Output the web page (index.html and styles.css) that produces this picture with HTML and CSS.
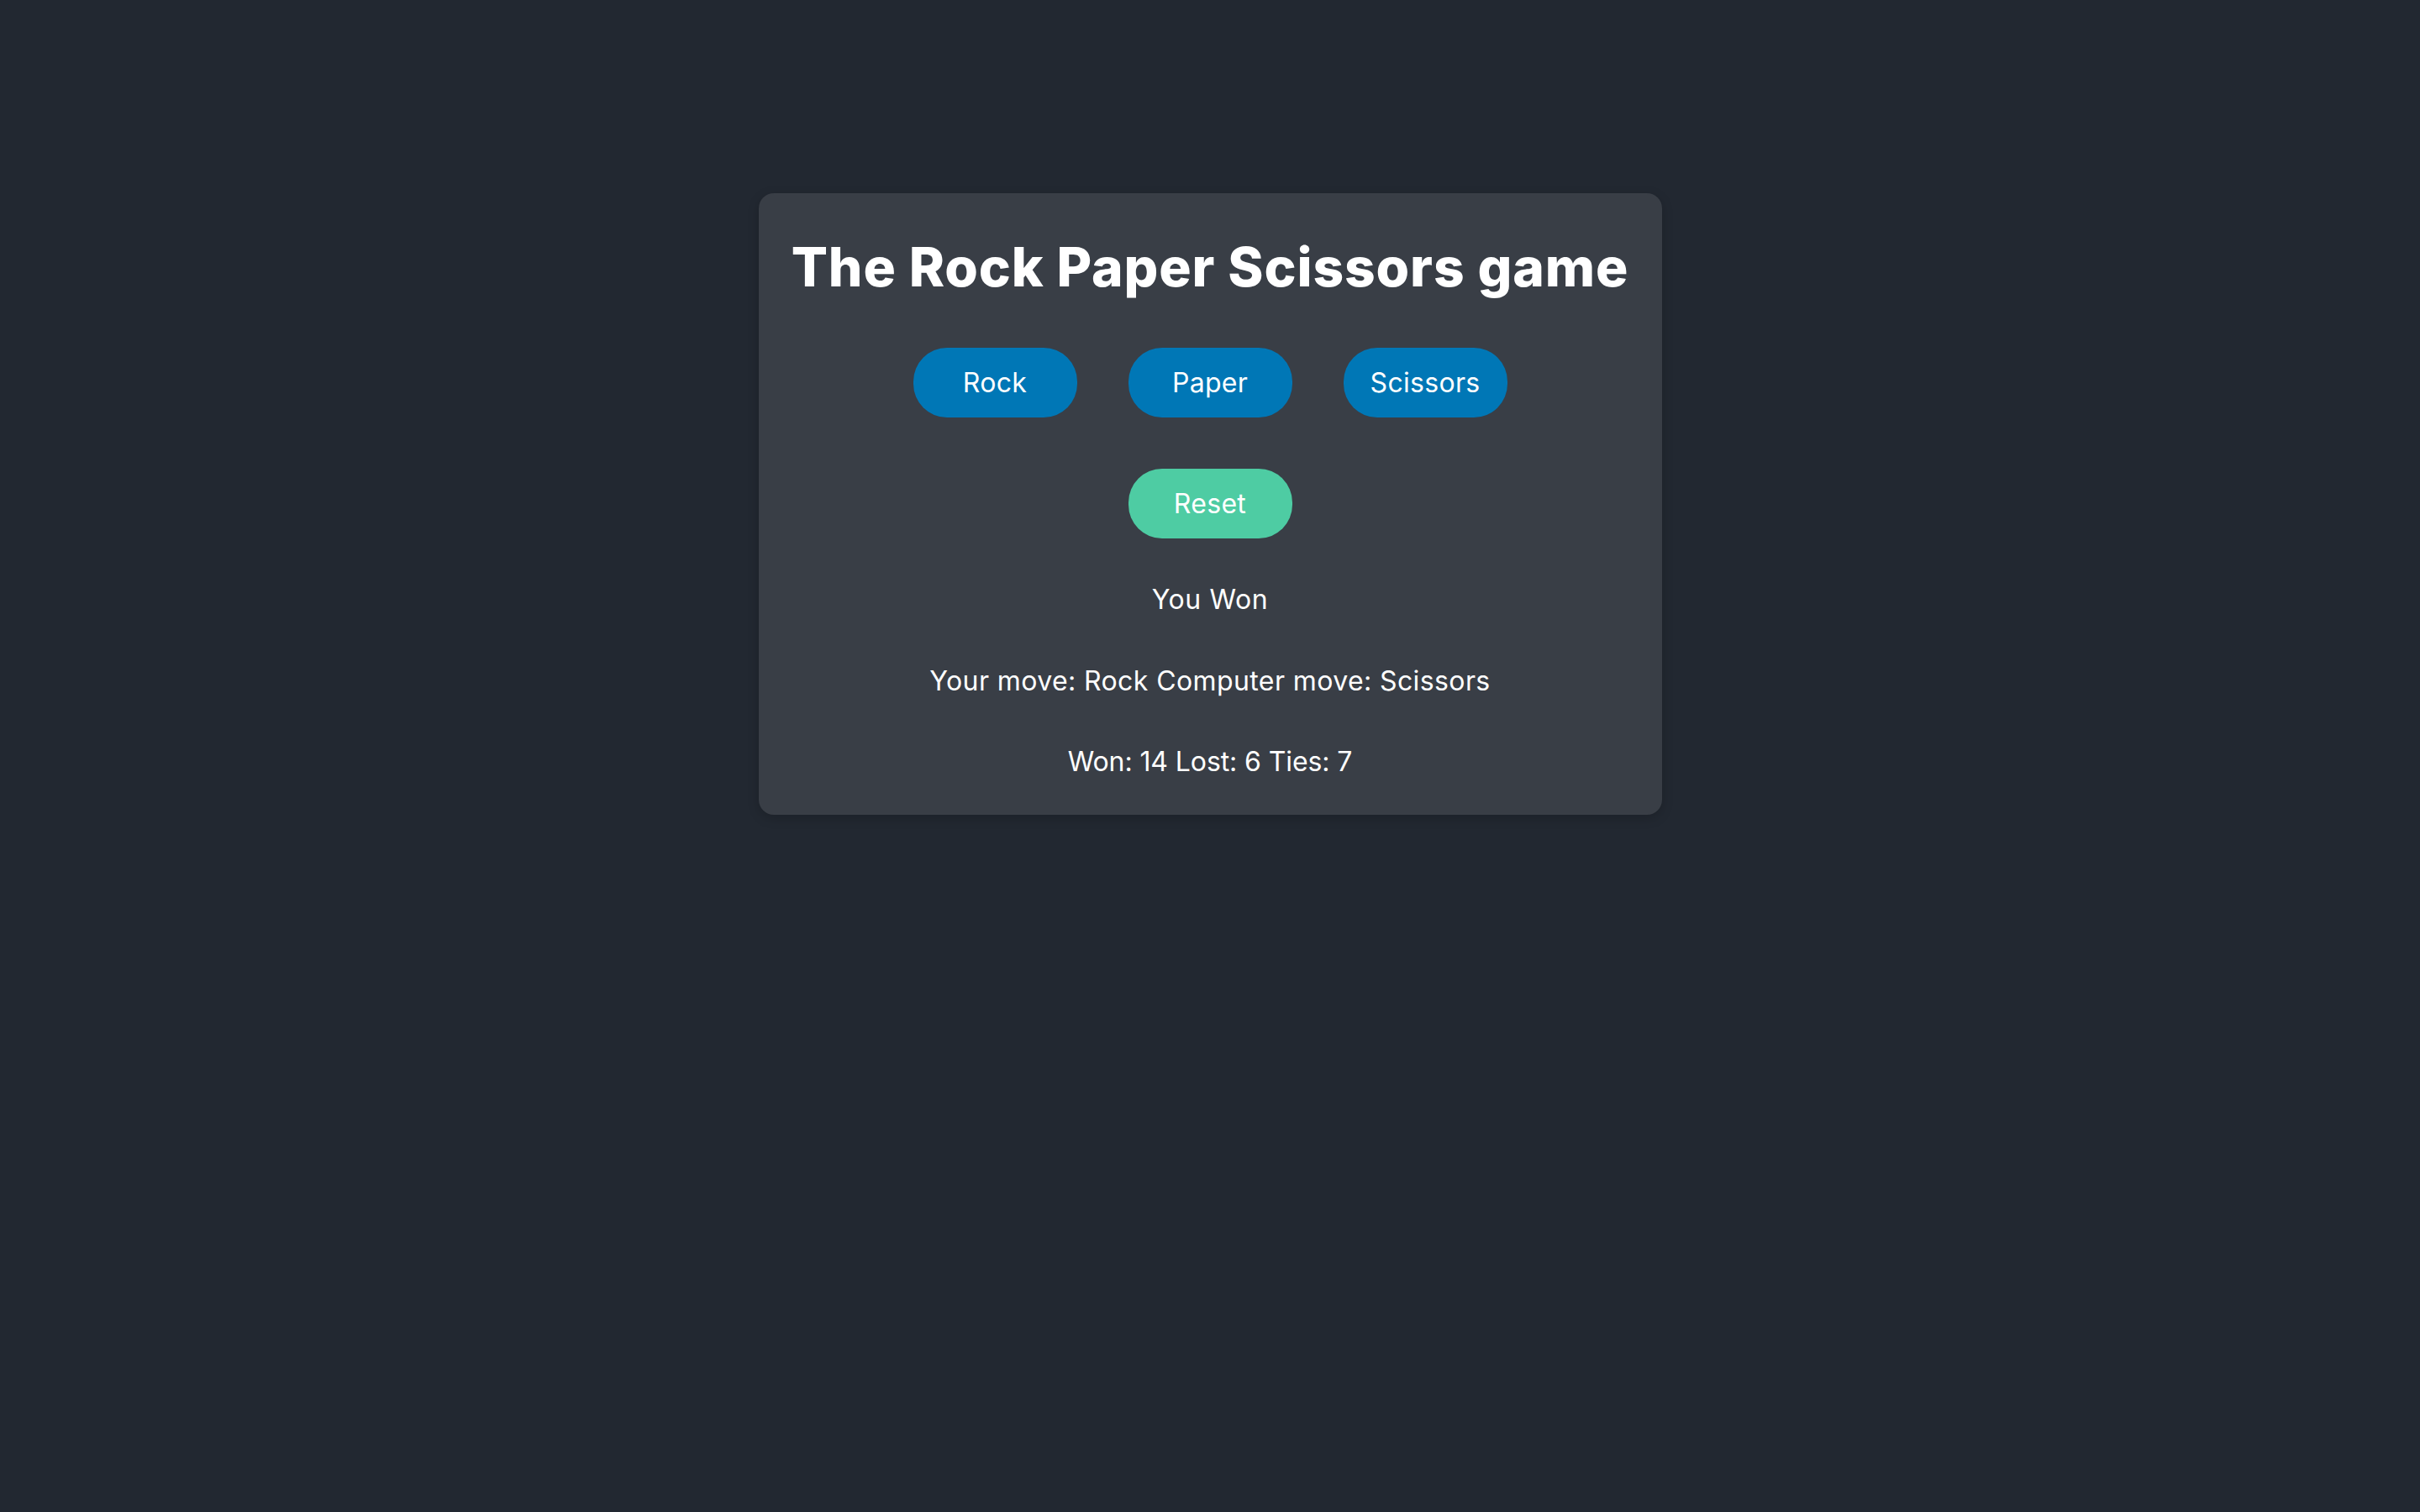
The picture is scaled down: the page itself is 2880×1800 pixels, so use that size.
FILE: index.html
```html
<!DOCTYPE html>
<html lang="en">
<head>
<meta charset="utf-8">
<title>Rock Paper Scissors</title>
<link rel="stylesheet" href="styles.css">
</head>
<body>
<main class="card">
  <h1 class="title">The Rock Paper Scissors game</h1>
  <div class="moves">
    <button class="btn btn-move">Rock</button>
    <button class="btn btn-move">Paper</button>
    <button class="btn btn-move">Scissors</button>
  </div>
  <div class="controls">
    <button class="btn btn-reset">Reset</button>
  </div>
  <p class="line result">You Won</p>
  <p class="line moves-info">Your move: Rock Computer move: Scissors</p>
  <p class="line score">Won: 14 Lost: 6 Ties: 7</p>
</main>
</body>
</html>
```

FILE: styles.css
```css
html, body {
  margin: 0;
  padding: 0;
}
body {
  background: #222831;
  font-family: Inter, "Open Sans", sans-serif;
  color: #ffffff;
  min-height: 1800px;
  padding-top: 230px;
  box-sizing: border-box;
}
.card {
  width: 1075px;
  height: 740px;
  box-sizing: border-box;
  margin: 0 auto;
  background: #393e46;
  border-radius: 18px;
  box-shadow: 0 4px 14px rgba(0, 0, 0, 0.18);
  display: flex;
  flex-direction: column;
  align-items: center;
  padding-top: 49px;
}
.title {
  margin: 0;
  font-size: 64px;
  font-weight: 800;
  line-height: 78px;
  letter-spacing: 0.9px;
  white-space: nowrap;
}
.moves {
  display: flex;
  gap: 61px;
  margin-top: 57px;
}
.controls {
  margin-top: 61px;
  display: flex;
}
.btn {
  width: 195px;
  height: 83px;
  border: none;
  border-radius: 40px;
  color: #ffffff;
  font-family: Inter, "Open Sans", sans-serif;
  font-size: 32px;
  font-weight: 400;
  letter-spacing: 0.3px;
  padding: 0;
  cursor: pointer;
}
.btn-move {
  background: #0077b6;
}
.btn-reset {
  background: #4ecca3;
}
.line {
  margin: 0;
  font-size: 32px;
  line-height: 40px;
  letter-spacing: 0.4px;
}
.result {
  margin-top: 53px;
  letter-spacing: 0.6px;
}
.moves-info {
  margin-top: 57px;
}
.score {
  margin-top: 56px;
  letter-spacing: -0.1px;
}
```
